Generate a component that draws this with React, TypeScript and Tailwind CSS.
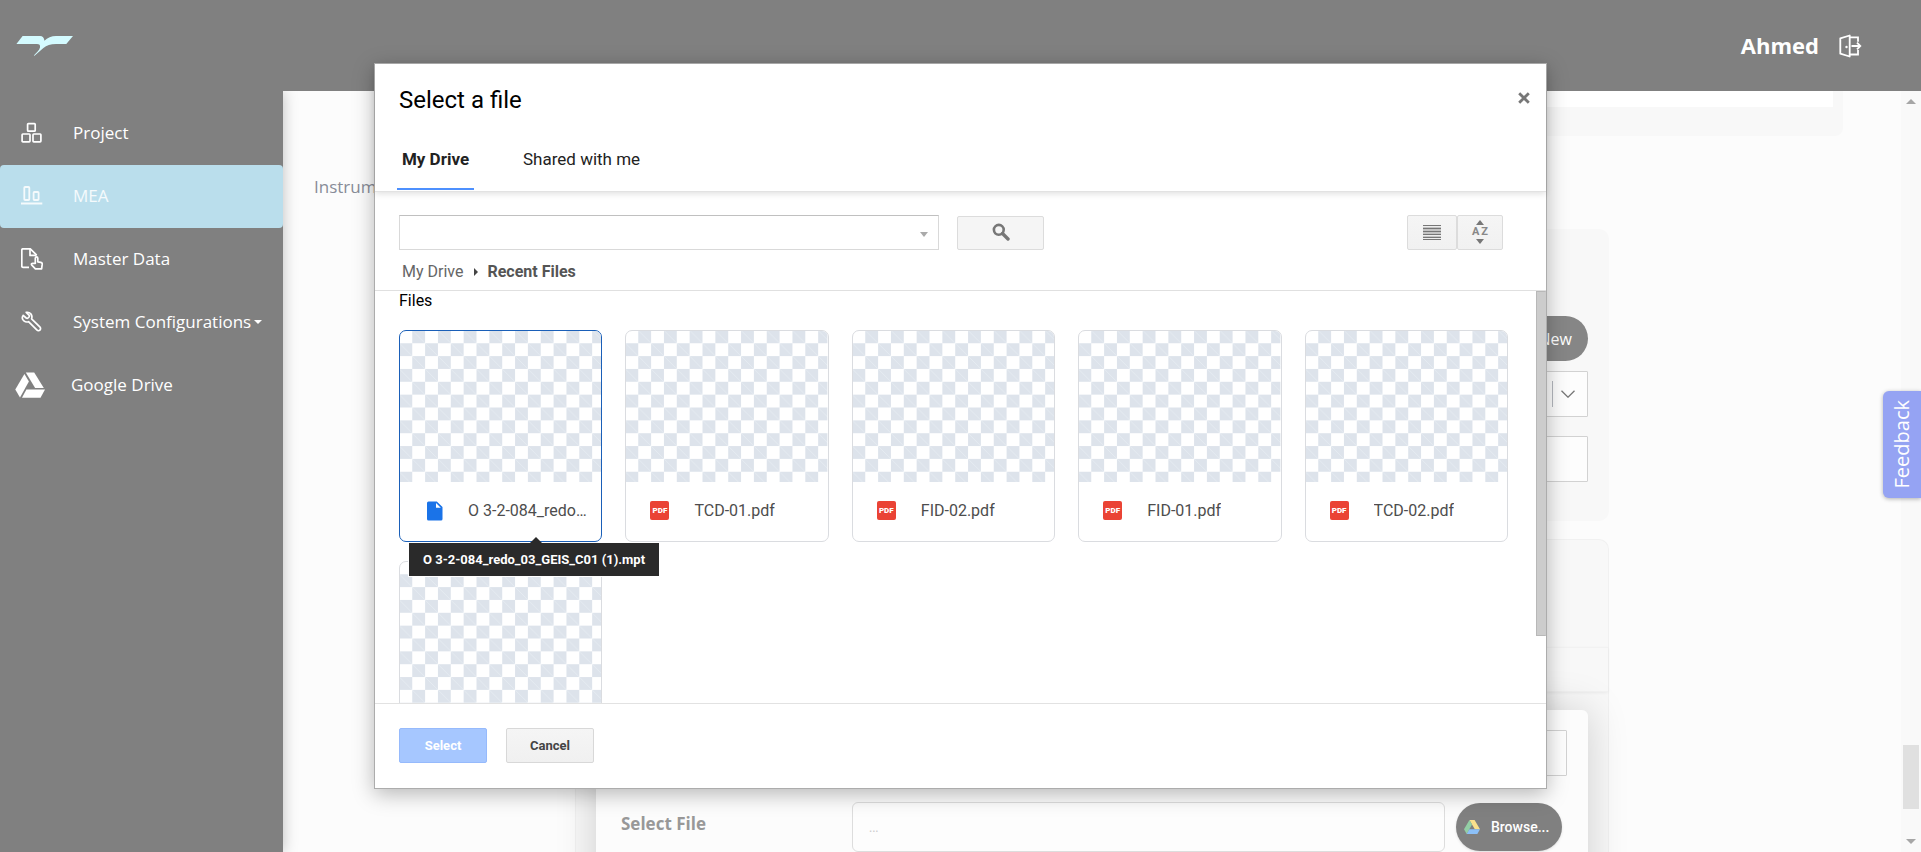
import React, { useState } from "react";

type IconProps = { className?: string };

function LogoMark() {
  return (
    <svg viewBox="0 0 60 22" className="h-[22px] w-[60px]" aria-hidden="true">
      <path
        d="M8.6 1H26c2.600 0 4.200 1.700 4.400 4.700C33.500 2.600 37.500 1 42 1h17l-6.700 8H42c-5.600 0-9.300 1.400-12.600 4L20.500 20.700l-.7-.2c2.400-2.600 5.800-5.600 6.200-8C26.400 10 25.400 9 23 9H2.400z"
        fill="#d4fbff"
      />
    </svg>
  );
}

function BoxesIcon({ className }: IconProps) {
  return (
    <svg viewBox="0 0 22 22" className={className} fill="none" stroke="currentColor" strokeWidth="1.700">
      <rect x="6.600" y="1.600" width="7.600" height="7.600" rx=".8" />
      <rect x="1.100" y="12" width="7.900" height="7.900" rx=".8" />
      <rect x="12" y="12" width="7.900" height="7.900" rx=".8" />
    </svg>
  );
}

function BarsIcon({ className }: IconProps) {
  return (
    <svg viewBox="0 0 22 22" className={className} fill="none" stroke="currentColor" strokeWidth="1.800">
      <rect x="3.300" y="2" width="5" height="13" rx=".8" />
      <rect x="12.600" y="7" width="5" height="8" rx=".8" />
      <path d="M0 18.500h21.300" strokeWidth="2" />
    </svg>
  );
}

function FileTouchIcon({ className }: IconProps) {
  return (
    <svg viewBox="0 0 22 22" className={className} fill="none" stroke="currentColor" strokeWidth="1.700" strokeLinejoin="round">
      <path d="M8 19.300H2a1.200 1.200 0 0 1-1.200-1.200V2A1.200 1.200 0 0 1 2 .8h7.300l6.400 6.400" />
      <path d="M9 1v6.400h6.500" />
      <path d="M14.300 15.500V10.200c0-1.700 2.500-1.700 2.500 0v3.600l3 .6c1 .2 1.500.8 1.400 1.800l-.6 4.600h-6.200l-3.600-3.700c-.9-1 .3-2.200 1.400-1.700z" />
    </svg>
  );
}

function WrenchIcon({ className }: IconProps) {
  return (
    <svg viewBox="0 0 22 22" className={className} fill="none" stroke="currentColor" strokeWidth="1.700" strokeLinejoin="round">
      <path d="M5.200 1.400 8 4.200c.5.500.4 1.300 0 1.800l-1 1c-.5.500-1.300.5-1.800 0L2.200 4.400c-1.300 2-.8 4.300.7 5.500 1.400 1.100 3.200 1.300 4.600.8l8.300 8.200c1 1 2.300 1 3.100.2.900-.9.900-2.200-.1-3.200l-8.200-8.100c.6-1.700.4-3.500-.8-4.900-1.200-1.400-2.900-1.900-4.600-1.500z" />
    </svg>
  );
}

function DriveIcon({ className }: IconProps) {
  return (
    <svg viewBox="0 0 30 26" className={className} fill="currentColor">
      <path d="M10.800.5h8.400L28.800 16h-8.700z" />
      <path d="M9.400 2 13.900 9.400 5 25.500.3 17.500z" />
      <path d="M11.400 17.500H30L25.500 25.800H7z" />
    </svg>
  );
}

function DriveColorIcon() {
  return (
    <svg viewBox="0 0 30 26" className="h-[14px] w-4" aria-hidden="true">
      <path d="M10.200 0h9.600L30 17h-9.700z" fill="#fbe08c" />
      <path d="M10.200 0 15 8.500 5 26 0 17z" fill="#93cfa5" />
      <path d="M10 17h20l-5 9H5z" fill="#8cc0f8" />
    </svg>
  );
}

function LogoutIcon() {
  return (
    <svg viewBox="0 0 24 24" className="size-6" fill="none" stroke="currentColor" strokeWidth="1.800" aria-hidden="true">
      <path d="M2.300 4.300 11.700 1.500v21L2.300 19.700z" strokeLinejoin="round" />
      <path d="M12 3.300h8v4.500M12 20.500h8v-4.500" />
      <path d="M13.500 12h8.500M19 8.600l3.300 3.400-3.300 3.400" />
      <circle cx="8.500" cy="13" r="1.200" fill="currentColor" stroke="none" />
    </svg>
  );
}

const navItems = [
  { label: "Project", Icon: BoxesIcon },
  { label: "MEA", Icon: BarsIcon, active: true },
  { label: "Master Data", Icon: FileTouchIcon },
  { label: "System Configurations", Icon: WrenchIcon, caret: true },
  { label: "Google Drive", Icon: DriveIcon, wide: true },
];

function Sidebar() {
  return (
    <nav className="z-10 w-[283px] shrink-0 bg-[#808080] pt-[11px] shadow-[0_0_14px_rgba(0,0,0,0.25)]">
      {navItems.map(({ label, Icon, active, caret, wide }) => (
        <a
          key={label}
          href="#"
          className={`flex h-[63px] items-center rounded pb-[2px] text-[17px] ${
            active ? "bg-[#badeec] text-white/85" : "text-white"
          } ${wide ? "gap-[26px] pl-[15px]" : "gap-[30px] pl-[21px]"}`}
        >
          <Icon className={wide ? "h-[26px] w-[30px]" : "size-[22px]"} />
          <span className="flex items-center gap-[3px] whitespace-nowrap">
            {label}
            {caret && <span className="border-x-4 border-t-4 border-x-transparent border-t-white" />}
          </span>
        </a>
      ))}
    </nav>
  );
}

function BackgroundPage() {
  const field = "h-[46px] w-full rounded-[1px] border border-[#d2d2d2] bg-[#fdfdfd]";
  return (
    <main className="min-w-0 flex-1 overflow-hidden bg-[#fcfcfc]">
      <div className="ml-[292px] mr-[58px] h-[45px] rounded-b-lg bg-[#f8f8f8] pr-[10px]">
        <div className="h-4 bg-white" />
      </div>
      <h2 className="mt-[39px] pl-[31px] text-[17px] leading-6 font-medium text-[#888c98]">Instruments</h2>
      <section className="mx-[292px] mt-[30px] h-[292px] rounded-[10px] bg-[#f8f8f8] px-[21px] pt-[87px]">
        <div className="flex justify-end">
          <button className="h-[45px] rounded-full bg-[#868686] px-4 text-base text-white">Add New</button>
        </div>
        <div className={`mt-[10px] flex items-center justify-end pr-3 ${field}`}>
          <span className="h-[26px] w-px bg-[#b4b8be]" />
          <svg viewBox="0 0 14 8" className="ml-2 h-2 w-[14px]" fill="none" stroke="#777" strokeWidth="1.300">
            <path d="M.5.700 7 7.200 13.500.7" />
          </svg>
        </div>
        <input aria-label="Description" className={`mt-[19px] ${field}`} />
      </section>
      <section className="mx-[292px] mt-[18px] rounded-t-[10px] border border-b-0 border-[#f1f1f1] bg-[#f8f8f8] pt-[107px]">
        <div className="h-[45px] border-y border-[#f2f2f2] shadow-[0_1px_3px_rgba(0,0,0,0.06)]" />
        <div className="mx-5 mt-[18px] h-[220px] rounded-t-md bg-[#fcfcfc] px-[21px] pt-5 shadow-[0_0_40px_rgba(0,0,0,0.17)]">
          <input aria-label="File type" className={field} />
          <div className="mt-[26px] flex items-center pr-[5px]">
            <label htmlFor="file-name" className="w-[235px] pb-[6px] pl-1 text-[17px] font-bold text-[#989898]">
              Select File
            </label>
            <input
              id="file-name"
              placeholder="..."
              className="h-[50px] min-w-0 flex-1 rounded-md border border-[#ddd] bg-[#fdfdfd] px-4 text-xs placeholder:text-[#ccc]"
            />
            <button className="ml-[11px] flex h-12 w-[106px] items-center gap-[11px] rounded-full bg-[#808080] pl-2 font-['Roboto',sans-serif] text-sm font-medium text-white shadow">
              <DriveColorIcon />
              Browse...
            </button>
          </div>
        </div>
      </section>
    </main>
  );
}

function PageScrollbar() {
  return (
    <div className="flex w-5 shrink-0 flex-col items-center bg-[#f9f9f9] pb-2 pt-2">
      <span className="border-x-[5px] border-b-[5px] border-x-transparent border-b-[#a6a6a6]" />
      <span className="mb-[30px] mt-auto h-16 w-4 bg-[#e0e0e0]" />
      <span className="border-x-[5px] border-t-[5px] border-x-transparent border-t-[#a6a6a6]" />
    </div>
  );
}

function Checkerboard({ id }: { id: string }) {
  return (
    <svg className="block h-[151px] w-full" aria-hidden="true">
      <defs>
        <pattern id={id} width="25.700" height="25.700" patternUnits="userSpaceOnUse" patternTransform="translate(-.6 -.6)">
          <path d="M12.850 0h12.850v12.850H12.850zM0 12.850h12.850V25.700H0z" fill="#dde3eb" />
          <path d="M12.850 0 25.700 12.850M0 12.850 12.850 25.700" stroke="#e8edf3" strokeWidth=".8" />
        </pattern>
      </defs>
      <rect width="100%" height="100%" fill={`url(#${id})`} />
    </svg>
  );
}

function DocIcon() {
  return (
    <svg viewBox="0 0 20 20" className="size-5 shrink-0" aria-hidden="true">
      <path d="M4.500.5h8.300L18.500 6v12a1.500 1.500 0 0 1-1.500 1.500H4.500A1.500 1.500 0 0 1 3 18V2A1.500 1.500 0 0 1 4.500.5z" fill="#1a73e8" />
      <path d="M12 2v4.800h4.800z" fill="#fff" />
    </svg>
  );
}

function PdfIcon() {
  return (
    <span className="flex h-[19px] w-5 shrink-0 items-center">
      <span className="flex h-[19px] w-[19px] items-center justify-center rounded-[2px] bg-[#ea4335] text-[8px] font-black leading-none text-white">
        PDF
      </span>
    </span>
  );
}

const files = [
  { name: "O 3-2-084_redo_03_GEIS_C01 (1).mpt", kind: "doc" },
  { name: "TCD-01.pdf", kind: "pdf" },
  { name: "FID-02.pdf", kind: "pdf" },
  { name: "FID-01.pdf", kind: "pdf" },
  { name: "TCD-02.pdf", kind: "pdf" },
  { name: "", kind: "pending" },
];

function FileCard({ index }: { index: number }) {
  const file = files[index];
  const hovered = index === 0;
  return (
    <li className="relative min-w-0">
      <button
        aria-label={file.name || "File"}
        className={`block h-[212px] w-full overflow-hidden rounded-[7px] border bg-white text-left ${
          hovered ? "border-[#1a5fb8]" : "border-[#dadce0]"
        }`}
      >
        <Checkerboard id={`checker-${index}`} />
        <span className="flex h-[59px] items-center gap-6 pb-[2px] pl-6 pr-2">
          {file.kind === "doc" && <DocIcon />}
          {file.kind === "pdf" && <PdfIcon />}
          <span className="truncate text-base text-[#4d4d4d]">{file.name}</span>
        </span>
      </button>
      {hovered && (
        <div
          role="tooltip"
          className="absolute left-[9px] top-[212px] z-20 border border-white bg-[#2a2a2a] px-[14px] py-[7px] text-[13px] font-bold leading-[19px] whitespace-nowrap text-white"
        >
          <span className="absolute -top-[6px] left-[121px] border-x-[6px] border-b-[6px] border-x-transparent border-b-[#2a2a2a]" />
          {file.name}
        </div>
      )}
    </li>
  );
}

function FilePicker() {
  const [query, setQuery] = useState("");
  const viewButton =
    "flex h-[35px] items-center justify-center rounded-[2px] border border-[#dcdcdc] bg-linear-to-b from-[#f5f5f5] to-[#f1f1f1] text-[#777]";
  return (
    <div
      role="dialog"
      aria-label="Select a file"
      className="flex h-full w-full max-w-[1173px] flex-col border border-[#acacac] bg-white font-['Roboto',sans-serif] shadow-[0_5px_20px_rgba(0,0,0,0.28)]"
    >
      <div className="relative z-10 border-b border-[#e2e2e2] shadow-[0_2px_6px_rgba(0,0,0,0.12)]">
        <div className="flex h-[72px] items-center justify-between pl-6 pr-4">
          <h1 className="text-2xl text-black">Select a file</h1>
          <button aria-label="Close" className="mb-1 flex text-[#777]">
            <svg viewBox="0 0 12 12" className="size-3" fill="none" stroke="currentColor" strokeWidth="2.800">
              <path d="m1.200 1.200 9.600 9.600M10.800 1.200 1.200 10.800" />
            </svg>
          </button>
        </div>
        <div role="tablist" className="flex gap-[43px] pb-px pl-[22px] text-[17px] text-[#222]">
          <button role="tab" aria-selected="true" className="h-[54px] w-[77px] border-b-2 border-[#4d90fe] pb-1 font-bold">
            My Drive
          </button>
          <button role="tab" aria-selected="false" className="h-[54px] border-b-2 border-transparent px-[6px] pb-1">
            Shared with me
          </button>
        </div>
      </div>

      <div className="flex pl-6 pr-[43px] pt-[23px]">
        <div className="flex h-[35px] w-[540px] items-center border border-[#d9d9d9] border-t-[#c0c0c0] pr-[10px]">
          <input
            aria-label="Search"
            value={query}
            onChange={(e) => setQuery(e.target.value)}
            className="h-full min-w-0 flex-1 px-2 outline-none"
          />
          <span className="mt-1 border-x-4 border-t-[5px] border-x-transparent border-t-[#aaa]" />
        </div>
        <button aria-label="Search files" className="ml-[18px] mt-px flex h-[34px] w-[87px] items-center justify-center rounded-[2px] border border-[#dcdcdc] bg-[#f5f5f5] pb-[2px]">
          <svg viewBox="0 0 18 18" className="size-[18px]" fill="none" stroke="#777">
            <circle cx="6.800" cy="6.800" r="4.900" strokeWidth="2.600" />
            <path d="m10.500 10.500 5.500 5.500" strokeWidth="3.400" strokeLinecap="round" />
          </svg>
        </button>
        <button aria-label="List view" className={`ml-auto w-[50px] ${viewButton}`}>
          <svg viewBox="0 0 18 15" className="h-[15px] w-[18px]">
            <rect width="18" height="15" fill="#c4c4c4" />
            <path d="M0 .5h18M0 3.500h18M0 6.500h18M0 9.500h18M0 12.500h18M0 14.500h18" stroke="#777" />
            <path d="M0 1.500h18M0 13.500h18M0 10.500h18" stroke="#eee" />
          </svg>
        </button>
        <button aria-label="Sort A to Z" className={`w-[46px] flex-col gap-[2px] pb-[2px] ${viewButton}`}>
          <span className="border-x-4 border-b-[5px] border-x-transparent border-b-[#777]" />
          <span className="flex gap-[2px] text-[11px] font-bold leading-[10px] text-[#888]">
            <span>A</span>
            <span>Z</span>
          </span>
          <span className="border-x-4 border-t-[5px] border-x-transparent border-t-[#777]" />
        </button>
      </div>

      <div className="flex h-[41px] items-center border-b border-[#e0e0e0] pb-px pl-[27px] pt-1 text-base text-[#555]">
        <a href="#" className="text-[#666]">My Drive</a>
        <span className="ml-[11px] mr-[9px] border-y-4 border-l-4 border-y-transparent border-l-[#444]" />
        <span className="font-bold">Recent Files</span>
      </div>

      <div className="flex min-h-0 flex-1">
        <div className="min-w-0 flex-1 overflow-hidden pl-6 pr-[28px]">
          <h2 className="h-[39px] text-base leading-5 text-black">Files</h2>
          <ul className="grid grid-cols-5 gap-x-[23px] gap-y-[19px]">
            {files.map((_, i) => (
              <FileCard key={i} index={i} />
            ))}
          </ul>
        </div>
        <div className="w-[10px]">
          <div className="h-[345px] border border-[#b8b8b8] border-r-[#ccc] bg-[#ccc]" />
        </div>
      </div>

      <div className="flex gap-[19px] border-t border-[#e2e2e2] px-6 pb-[25px] pt-6 text-[13px] font-bold">
        <button className="h-[35px] w-[88px] rounded-[2px] border border-[#96bafc] bg-[#a6c7ff] text-white">Select</button>
        <button className="h-[35px] w-[88px] rounded-[2px] border border-[#d8d8d8] bg-linear-to-b from-[#f5f5f5] to-[#f0f0f0] text-[#444]">
          Cancel
        </button>
      </div>
    </div>
  );
}

export default function App() {
  return (
    <div className="relative flex h-screen flex-col overflow-hidden font-['Open_Sans',sans-serif]">
      <header className="z-20 flex h-[91px] shrink-0 items-center justify-between bg-[#808080] pl-[14px] pr-[59px] text-white">
        <LogoMark />
        <div className="flex items-center gap-[19px]">
          <span className="text-[22px] font-bold">Ahmed</span>
          <button aria-label="Log out">
            <LogoutIcon />
          </button>
        </div>
      </header>
      <div className="flex min-h-0 flex-1">
        <Sidebar />
        <BackgroundPage />
        <PageScrollbar />
      </div>
      <button className="absolute right-0 top-[391px] flex h-[107px] w-[38px] items-center justify-center rounded-l-md bg-[#95a3f3] shadow-[0_1px_4px_rgba(0,0,0,0.3)]">
        <span className="rotate-180 text-[20px] leading-6 font-medium text-white [writing-mode:vertical-rl]">Feedback</span>
      </button>
      <div className="absolute inset-0 z-20 flex justify-center px-6 py-[63px]">
        <FilePicker />
      </div>
    </div>
  );
}
